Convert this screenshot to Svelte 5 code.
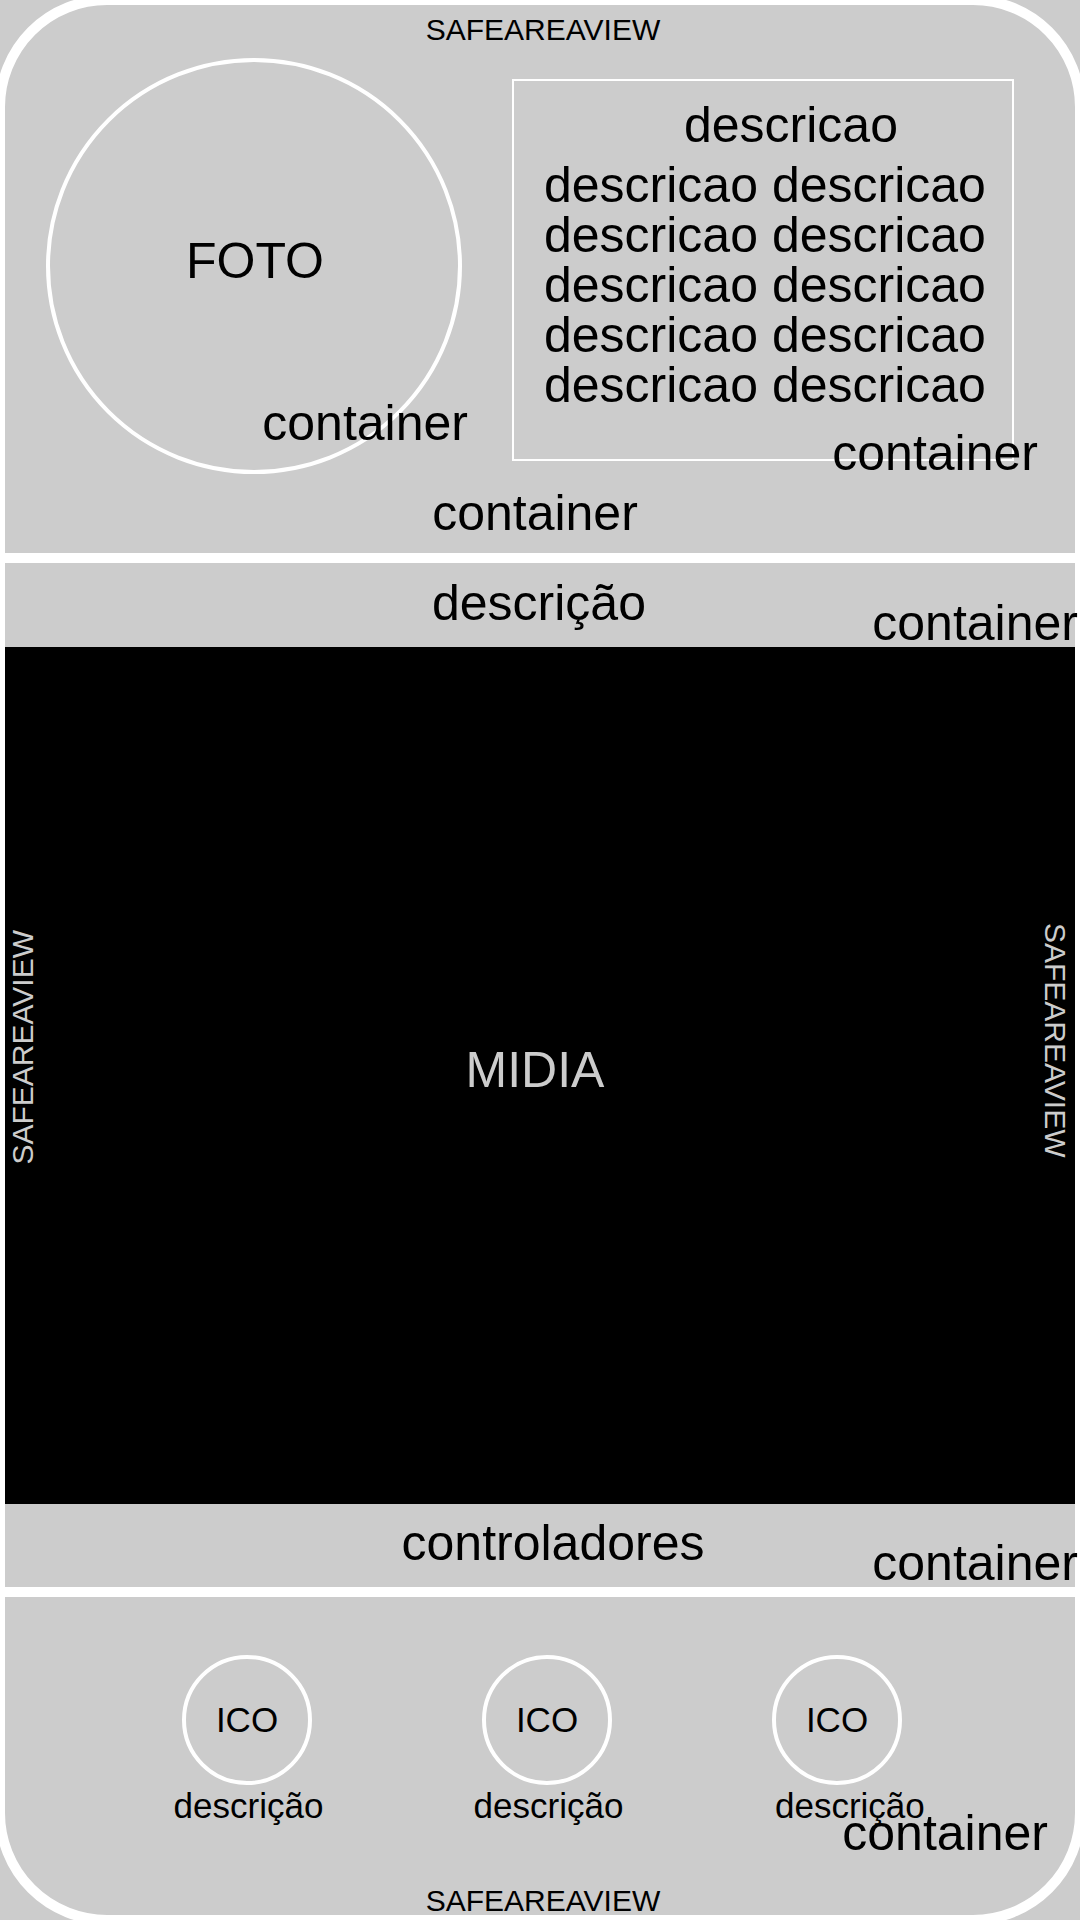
<script>
  const lines = Array.from({ length: 5 }, () => 'descricao descricao');
  const items = ['descrição', 'descrição', 'descrição'];
</script>

<main class="screen">
  <header class="profile">
    <p class="safe">SAFEAREAVIEW</p>
    <div class="profile-row">
      <div class="photo">
        <span>FOTO</span>
        <span class="tag">container</span>
      </div>
      <div class="about">
        <h1>descricao</h1>
        {#each lines as line}
          <p>{line}</p>
        {/each}
        <span class="tag">container</span>
      </div>
    </div>
    <p class="profile-tag">container</p>
  </header>

  <section class="strip divided">
    <h2>descrição</h2>
    <span class="tag">container</span>
  </section>

  <section class="media">
    <span class="side left">SAFEAREAVIEW</span>
    <span class="media-title">MIDIA</span>
    <span class="side right">SAFEAREAVIEW</span>
  </section>

  <section class="strip controls">
    <h2>controladores</h2>
    <span class="tag">container</span>
  </section>

  <footer class="bottom divided">
    <nav class="items">
      {#each items as label}
        <div class="item">
          <span class="icon">ICO</span>
          <span class="label">{label}</span>
        </div>
      {/each}
    </nav>
    <span class="tag">container</span>
    <p class="safe">SAFEAREAVIEW</p>
  </footer>
</main>

<style>
  :global(body) {
    background: #ccc;
    overflow-x: hidden;
  }

  :global(#app) {
    overflow: hidden;
  }

  .screen {
    display: flex;
    flex-direction: column;
    box-sizing: border-box;
    min-height: calc(100vh + 10px);
    margin: -5px;
    border: 10px solid #fff;
    border-radius: 112px;
    background: #ccc;
    color: #000;
    font-family: "Liberation Sans", Arial, sans-serif;
    font-size: 50px;
    line-height: 50px;
  }

  p,
  h1,
  h2 {
    margin: 0;
    font-size: inherit;
    font-weight: 400;
  }

  .safe {
    padding-left: 6px;
    font-size: 30px;
    line-height: 28px;
    text-align: center;
  }

  .tag {
    position: absolute;
  }

  .divided {
    border-top: 10px solid #fff;
  }

  .profile {
    padding: 11px 0 15px;
  }

  .profile-row {
    display: grid;
    grid-template-columns: 416fr 502fr;
    column-gap: 50px;
    align-items: start;
    padding: 14px 61px 14px 41px;
  }

  .photo {
    position: relative;
    display: flex;
    align-items: center;
    justify-content: center;
    box-sizing: border-box;
    aspect-ratio: 1;
    padding: 0 0 10px 2px;
    border: 4px solid #fff;
    border-radius: 50%;
  }

  .photo .tag {
    right: -10px;
    bottom: 22px;
  }

  .about {
    position: relative;
    margin-top: 21px;
    padding: 19px 0 49px 30px;
    border: 2px solid #fff;
    white-space: nowrap;
  }

  .about h1 {
    padding-left: 140px;
    margin-bottom: 10px;
  }

  .about .tag {
    right: -26px;
    bottom: -19px;
  }

  .profile-tag {
    padding-right: 10px;
    text-align: center;
  }

  .strip {
    position: relative;
    padding: 15px 2px 19px 0;
    text-align: center;
  }

  .strip .tag {
    right: -3px;
    bottom: -1px;
  }

  .controls {
    padding: 14px 0 19px 26px;
  }

  .media {
    flex: 1;
    display: flex;
    align-items: center;
    justify-content: space-between;
    min-height: 400px;
    padding: 0 6px 12px 4px;
    background: #000;
    color: #ccc;
  }

  .media-title {
    padding-right: 8px;
  }

  .side {
    font-size: 30px;
    line-height: 28px;
    writing-mode: vertical-rl;
  }

  .left {
    margin-bottom: 44px;
    transform: rotate(180deg);
  }

  .right {
    margin-bottom: 58px;
  }

  .bottom {
    position: relative;
    padding-top: 58px;
  }

  .items {
    display: flex;
    justify-content: space-between;
    padding: 0 153px 60px 167px;
    font-size: 35px;
    line-height: 42px;
  }

  .item {
    display: flex;
    flex-direction: column;
    align-items: center;
    width: 150px;
  }

  .item:last-child {
    align-items: flex-start;
  }

  .icon {
    display: flex;
    align-items: center;
    justify-content: center;
    box-sizing: border-box;
    width: 130px;
    height: 130px;
    border: 4px solid #fff;
    border-radius: 50%;
  }

  .label {
    margin-left: 3px;
  }

  .bottom .tag {
    right: 27px;
    bottom: 57px;
  }
</style>
